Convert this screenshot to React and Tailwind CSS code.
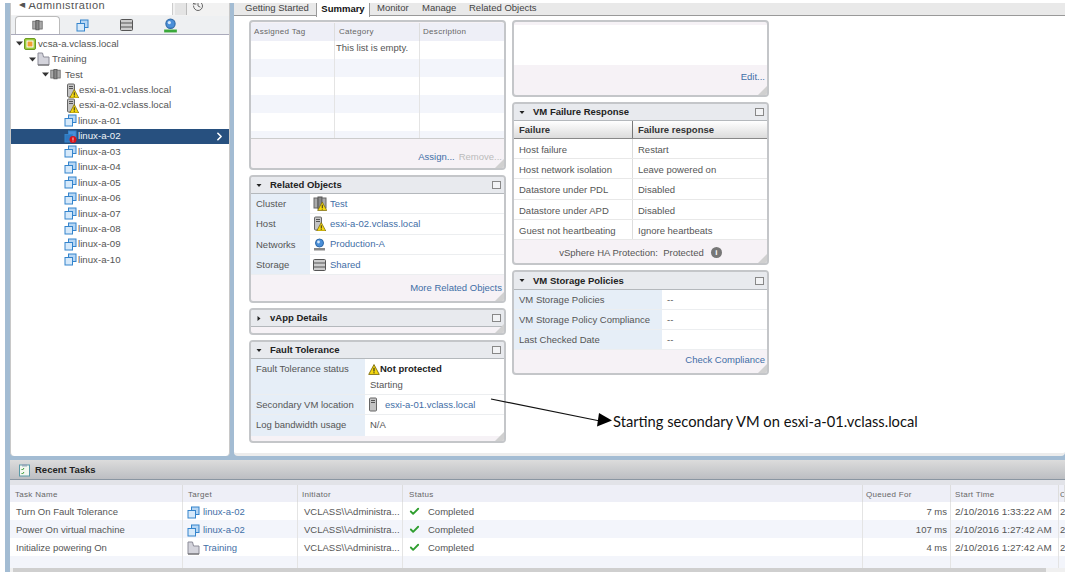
import React from "react";
import { ChevronRight, Check, History } from "lucide-react";

const Tri = ({ open = true, className = "" }) => (
  <svg width="7" height="7" viewBox="0 0 7 7" className={`shrink-0 ${className}`}>
    {open ? <path d="M0 1.5h7L3.5 5.5z" fill="#333" /> : <path d="M1.5 0v7L5.5 3.5z" fill="#333" />}
  </svg>
);

const SmallTri = ({ open = true }) => (
  <svg width="6" height="7" viewBox="0 0 6 7" className="ml-[2px] shrink-0">
    {open ? <path d="M.5 2h5L3 5z" fill="#222" /> : <path d="M1.5 1v5L4.5 3.500z" fill="#222" />}
  </svg>
);

const Warn = ({ x = 0, y = 0, s = 8 }) => (
  <g transform={`translate(${x} ${y}) scale(${s / 10})`}>
    <path d="M5 .5L9.8 9.5H.2z" fill="#f5d80f" stroke="#7a6a10" strokeWidth=".8" />
    <path d="M4.500 3.500h1v3.400h-1zM4.500 7.500h1v1h-1z" fill="#222" />
  </g>
);

const VmIcon = ({ alert, dark }) => (
  <svg width="13" height="13" viewBox="0 0 13 13" className="shrink-0">
    <rect x="4.500" y="1" width="7.500" height="7.500" fill={dark ? "#4a90d8" : "#b6d6f4"} stroke="#3484cc" />
    <rect x="1" y="4.500" width="7.500" height="7.500" fill={dark ? "#2f78c0" : "#d6e9fa"} stroke="#3484cc" />
    {alert && <circle cx="9" cy="9.500" r="3.500" fill="#d8141c" />}
    {alert && <path d="M8.600 7.500h.8v2.500h-.8zM8.600 10.600h.8v.8h-.8z" fill="#fff" />}
  </svg>
);

const HostIcon = ({ warn = true }) => (
  <svg width="13" height="15" viewBox="0 0 13 15" className="shrink-0">
    <rect x="1.500" y="1" width="7" height="13" rx="1" fill="#c4c4c4" stroke="#666" />
    <path d="M3 3.500h4M3 5.500h4" stroke="#555" />
    {warn && <Warn x={3.500} y={6} s={9.500} />}
  </svg>
);

const ClusterIcon = ({ warn, w = 14 }) => (
  <svg width={w} height="15" viewBox="0 0 14 15" className="shrink-0">
    <rect x="1" y="2" width="4" height="10" fill="#aaa" stroke="#666" />
    <rect x="5" y="1" width="4" height="12" fill="#888" stroke="#555" />
    <rect x="9" y="2" width="4" height="10" fill="#aaa" stroke="#666" />
    {warn && <Warn x={4.500} y={5.500} s={9.500} />}
  </svg>
);

const FolderIcon = () => (
  <svg width="13" height="14" viewBox="0 0 13 14" className="shrink-0">
    <path d="M1 13V1h4.500l1 4H12v8z" fill="#d4d4dc" stroke="#8c8c98" />
    <path d="M1 13h11" stroke="#666" />
  </svg>
);

const VcIcon = () => (
  <svg width="12" height="12" viewBox="0 0 12 12" className="shrink-0">
    <rect x=".5" y=".5" width="11" height="11" rx="1.500" fill="#9ccc3c" stroke="#6c9a20" />
    <rect x="3" y="3" width="6" height="6" fill="#f0a030" stroke="#fff" />
  </svg>
);

const StorageIcon = () => (
  <svg width="13" height="12" viewBox="0 0 13 12" className="shrink-0">
    <rect x=".5" y=".5" width="12" height="11" rx="1" fill="#ccc" stroke="#555" />
    <path d="M1 4h11M1 8h11" stroke="#555" />
  </svg>
);

const NetIcon = ({ big }) => (
  <svg width={big ? 15 : 13} height={big ? 15 : 13} viewBox="0 0 13 13" className="shrink-0">
    <circle cx="6.500" cy="5" r="4" fill="#4a8fd8" stroke="#2f6aa8" />
    <circle cx="5.500" cy="4" r="1.400" fill="#d6e8fa" />
    <rect x="1" y="10" width="11" height="2.500" fill={big ? "#3aa83a" : "#888"} />
  </svg>
);

const Row = ({ label, labelW, children, h, last }) => (
  <div className={`flex ${h} ${last ? "" : "border-b border-[#eceef0]"}`}>
    <div className={`${labelW} shrink-0 bg-[#e6eef7] pl-[5px] pt-[4px]`}>{label}</div>
    <div className="flex-1 bg-white pl-[5px] pt-[4px]">{children}</div>
  </div>
);

const IconRow = ({ label, labelW, h, icon, children }) => (
  <div className={`flex ${h} border-b border-[#eceef0]`}>
    <div className={`${labelW} shrink-0 bg-[#e6eef7] pl-[5px] pt-[4px]`}>{label}</div>
    <div className="flex flex-1 items-center bg-white pl-[3px]">
      <span className="w-[17px] shrink-0">{icon}</span>
      {children}
    </div>
  </div>
);

const Grip = () => (
  <svg width="9" height="9" viewBox="0 0 9 9" className="absolute bottom-0 right-0">
    <path d="M9 0v9H0z" fill="#d0d0d0" />
  </svg>
);

const Panel = ({ title, open = true, h, head = "h-[17px]", children }) => (
  <div className={`relative ${h} shrink-0 overflow-hidden rounded-[4px] border-2 border-[#c4c6c9] bg-[#f6f2f6]`}>
    {title && (
      <div className={`flex ${head} items-center border-b border-[#b4b8bc] bg-[#e8eaee] pl-[3px] pr-[3px] font-bold text-[#222]`}>
        <SmallTri open={open} />
        <span className="ml-[8px] flex-1">{title}</span>
        <span className="h-[8px] w-[9px] border border-[#888] bg-[#f2f3f5]" />
      </div>
    )}
    {children}
    <Grip />
  </div>
);

const Link = ({ children }) => <span className="text-[#3f6ea6]">{children}</span>;

const treeVms = ["linux-a-03", "linux-a-04", "linux-a-05", "linux-a-06", "linux-a-07", "linux-a-08", "linux-a-09", "linux-a-10"];

const TreeRow = ({ pad, children, selected }) => (
  <div className={`flex h-[15.45px] items-center ${pad} ${selected ? "bg-[#27507f] text-[#f0f4f8]" : ""}`}>{children}</div>
);

const Nav = () => (
  <div className="flex w-[220px] shrink-0 flex-col rounded-b-[4px] border-l border-r border-[#c8c8c8] bg-white text-[9.7px]">
    <div className="flex h-[13px] shrink-0 items-start overflow-hidden bg-[#f2f2f2]">
      <div className="flex h-[12px] w-[162px] items-start overflow-hidden border-r border-[#ccc] bg-white pl-[8px] text-[11px] leading-[10px] tracking-[0.5px]">
        <span className="-mt-[3px] mr-[3px] text-[8px] text-[#555]">◀</span>
        <span className="-mt-[3px]">Administration</span>
      </div>
      <div className="ml-[2px] h-[12px] w-[12px] border-r border-[#bbb] bg-[#e4e4e4]" />
      <History size={12} className="ml-[5px] -mt-[3px] text-[#666]" />
    </div>
    <div className="flex h-[19px] shrink-0 border-b border-[#aab] bg-[#eef0f2] pl-[4px]">
      <div className="flex w-[45px] items-center justify-center rounded-t-[4px] border border-b-0 border-[#bbb] bg-white">
        <ClusterIcon w={11} />
      </div>
      <div className="flex w-[44px] items-center justify-center"><VmIcon /></div>
      <div className="flex w-[44px] items-center justify-center"><StorageIcon /></div>
      <div className="flex w-[44px] items-center justify-center"><NetIcon big /></div>
    </div>
    <div className="pt-[1px]">
      <TreeRow pad="pl-[5px]"><Tri /><span className="ml-[1px] mr-[2px]"><VcIcon /></span>vcsa-a.vclass.local</TreeRow>
      <TreeRow pad="pl-[18px]"><Tri /><span className="ml-[1px] mr-[2px]"><FolderIcon /></span>Training</TreeRow>
      <TreeRow pad="pl-[31px]"><Tri /><span className="ml-[1px] mr-[4px]"><ClusterIcon w={11} /></span>Test</TreeRow>
      <TreeRow pad="pl-[55px]"><HostIcon />esxi-a-01.vclass.local</TreeRow>
      <TreeRow pad="pl-[55px]"><HostIcon />esxi-a-02.vclass.local</TreeRow>
      <TreeRow pad="pl-[53px]"><VmIcon /><span className="ml-[1px]">linux-a-01</span></TreeRow>
      <TreeRow pad="pl-[53px] pr-[3px]" selected>
        <VmIcon alert dark /><span className="ml-[1px] flex-1">linux-a-02</span>
        <ChevronRight size={13} strokeWidth={3} className="text-white" />
      </TreeRow>
      {treeVms.map((name) => (
        <TreeRow key={name} pad="pl-[53px]"><VmIcon /><span className="ml-[1px]">{name}</span></TreeRow>
      ))}
    </div>
  </div>
);

const TabBar = () => (
  <div className="flex h-[13px] shrink-0 border-b border-[#999] bg-[#e9e9e9] pl-[11px] leading-[9px] text-[#444]">
    <div className="w-[71px]">Getting Started</div>
    <div className="h-[14px] w-[54px] border-l border-r border-[#999] bg-white pt-px text-center font-bold text-[#111]">Summary</div>
    <div className="w-[52px] pl-[7px]">Monitor</div>
    <div className="w-[47px]">Manage</div>
    <div>Related Objects</div>
  </div>
);

const tagRows = ["bg-white", "bg-[#f3f5fb]", "bg-white", "bg-[#f3f5fb]", "bg-white", "bg-[#f3f5fb]"];

const TagsPanel = () => (
  <Panel h="h-[150px]">
    <div className="mt-px grid h-[18px] grid-cols-[84px_85px_1fr] bg-[#eeeff7] text-[8px] tracking-[0.3px] text-[#666]">
      <div className="border-r border-[#ddd] pl-[3px] pt-[3px]">Assigned Tag</div>
      <div className="border-r border-[#ddd] pl-[4px] pt-[3px]">Category</div>
      <div className="pl-[3px] pt-[3px]">Description</div>
    </div>
    {tagRows.map((bg, i) => (
      <div key={i} className={`grid grid-cols-[84px_85px_1fr] ${bg} ${i === 5 ? "h-[8px] border-b border-[#ccc]" : "h-[18px]"}`}>
        <div className="border-r border-[#e4e4e4]" />
        <div className="border-r border-[#e4e4e4] pl-px pt-px">{i === 0 ? "This list is empty." : ""}</div>
        <div />
      </div>
    ))}
    <div className="pr-[2px] pt-[12px] text-right">
      <Link>Assign...</Link><span className="ml-[4px] text-[#bbb]">Remove...</span>
    </div>
  </Panel>
);

const RelatedPanel = () => (
  <Panel title="Related Objects" h="h-[128px]">
    <IconRow label="Cluster" labelW="w-[59px]" h="h-[20.3px]" icon={<ClusterIcon warn />}><Link>Test</Link></IconRow>
    <IconRow label="Host" labelW="w-[59px]" h="h-[20.3px]" icon={<HostIcon />}><Link>esxi-a-02.vclass.local</Link></IconRow>
    <IconRow label="Networks" labelW="w-[59px]" h="h-[20.3px]" icon={<NetIcon />}><Link>Production-A</Link></IconRow>
    <IconRow label="Storage" labelW="w-[59px]" h="h-[20.3px]" icon={<StorageIcon />}><Link>Shared</Link></IconRow>
    <div className="pr-[2px] pt-[7px] text-right"><Link>More Related Objects</Link></div>
  </Panel>
);

const FaultPanel = () => (
  <Panel title="Fault Tolerance" h="h-[103px]">
    <Row label="Fault Tolerance status" labelW="w-[114px]" h="h-[36px]">
      <div className="flex items-center font-bold text-[#222]">
        <svg width="12" height="11" viewBox="0 0 10 10" className="-ml-[2px] shrink-0"><Warn s={10} /></svg>
        Not protected
      </div>
      <div className="mt-[4px]">Starting</div>
    </Row>
    <IconRow label="Secondary VM location" labelW="w-[114px]" h="h-[20px]" icon={<HostIcon warn={false} />}>
      <Link>esxi-a-01.vclass.local</Link>
    </IconRow>
    <Row label="Log bandwidth usage" labelW="w-[114px]" h="h-[20.5px]" last>N/A</Row>
  </Panel>
);

const failureRows = [
  ["Host failure", "Restart"],
  ["Host network isolation", "Leave powered on"],
  ["Datastore under PDL", "Disabled"],
  ["Datastore under APD", "Disabled"],
  ["Guest not heartbeating", "Ignore heartbeats"],
];

const FailurePanel = () => (
  <Panel title="VM Failure Response" h="h-[163px]">
    <div className="grid h-[18px] grid-cols-[119px_1fr] border-b border-[#888] bg-gradient-to-b from-white to-[#dcdcdc] font-bold text-[#333]">
      <div className="border-r border-[#777] pl-[5px] pt-[3px]">Failure</div>
      <div className="pl-[5px] pt-[3px]">Failure response</div>
    </div>
    {failureRows.map(([a, b]) => (
      <div key={a} className="grid h-[20.2px] grid-cols-[119px_1fr] border-b border-[#e8e8e8] bg-white">
        <div className="border-r border-[#ddd] pl-[5px] pt-[5px]">{a}</div>
        <div className="pl-[5px] pt-[5px]">{b}</div>
      </div>
    ))}
    <div className="flex items-center justify-center gap-[4px] pt-[7px]">
      <span>vSphere HA Protection:&nbsp; Protected</span>
      <span className="ml-[3px] flex h-[11px] w-[11px] items-center justify-center rounded-full bg-[#777] text-[8px] font-bold text-white">i</span>
    </div>
  </Panel>
);

const StoragePanel = () => (
  <Panel title="VM Storage Policies" h="h-[105px]" head="h-[18px]">
    <Row label="VM Storage Policies" labelW="w-[148px]" h="h-[20px]">--</Row>
    <Row label="VM Storage Policy Compliance" labelW="w-[148px]" h="h-[20px]">--</Row>
    <Row label="Last Checked Date" labelW="w-[148px]" h="h-[20px]">--</Row>
    <div className="pr-[2px] pt-[4px] text-right"><Link>Check Compliance</Link></div>
  </Panel>
);

const taskCols = "grid-cols-[173px_115px_105px_460px_88px_108px_1fr]";

const tasks = [
  { name: "Turn On Fault Tolerance", target: "linux-a-02", queued: "7 ms", start: "2/10/2016 1:33:22 AM", bg: "bg-white" },
  { name: "Power On virtual machine", target: "linux-a-02", queued: "107 ms", start: "2/10/2016 1:27:42 AM", bg: "bg-[#f3f5fb]" },
  { name: "Initialize powering On", target: "Training", queued: "4 ms", start: "2/10/2016 1:27:42 AM", bg: "bg-white", folder: true },
];

const headPads = ["pl-[5px]", "pl-[5px]", "pl-[4px]", "pl-[6px]", "pl-[3px]", "pl-[4px]", "pl-[1px]"];

const RecentTasks = () => (
  <div className="mt-[4px] flex h-[113px] shrink-0 flex-col bg-white">
    <div className="flex h-[20px] shrink-0 items-center border-b border-[#8a96a2] bg-gradient-to-b from-[#dcdcdc] to-[#bcbec2] pl-[8px] pt-px font-bold text-[#222]">
      <svg width="13" height="14" viewBox="0 0 13 14" className="shrink-0">
        <rect x="1.500" y="2" width="10" height="11" fill="#f4f8f0" stroke="#5a9aa8" />
        <rect x="4" y="1" width="5" height="2.500" fill="#9ab" />
        <path d="M3.500 6l1 1 1.500-2M3.500 10l1 1 1.500-2" stroke="#3a9a3a" fill="none" />
      </svg>
      <span className="ml-[4px]">Recent Tasks</span>
    </div>
    <div className="h-[5px] shrink-0 bg-[#e2e3e8]" />
    <div className={`grid h-[17px] shrink-0 ${taskCols} bg-[#eeeff7] text-[8px] tracking-[0.3px] text-[#666]`}>
      {["Task Name", "Target", "Initiator", "Status", "Queued For", "Start Time", "C"].map((c, i) => (
        <div key={c} className={`overflow-hidden border-r border-[#ddd] pt-[4px] ${headPads[i]}`}>{c}</div>
      ))}
    </div>
    {tasks.map((t) => (
      <div key={t.name} className={`grid h-[18px] shrink-0 ${taskCols} ${t.bg}`}>
        <div className="border-r border-[#e4e4e4] pl-[6px] pt-[4px]">{t.name}</div>
        <div className="flex items-center gap-[3px] border-r border-[#e4e4e4] pl-[4px] pt-[2px]">
          {t.folder ? <FolderIcon /> : <VmIcon />}<Link>{t.target}</Link>
        </div>
        <div className="border-r border-[#e4e4e4] pl-[6px] pt-[4px]">VCLASS\\Administra...</div>
        <div className="flex items-center border-r border-[#e4e4e4] pl-[6px] pt-[2px]">
          <Check size={11} strokeWidth={4} className="-mt-[2px] text-[#2f9e2f]" /><span className="ml-[8px]">Completed</span>
        </div>
        <div className="border-r border-[#e4e4e4] pr-[3px] pt-[4px] text-right">{t.queued}</div>
        <div className="border-r border-[#e4e4e4] pl-[4px] pt-[4px] text-[9.9px]">{t.start}</div>
        <div className="overflow-hidden pl-[1px] pt-[4px]">2</div>
      </div>
    ))}
    <div className={`grid h-[12px] shrink-0 ${taskCols} bg-[#f3f5fb]`}>
      {[0, 1, 2, 3, 4, 5].map((i) => <div key={i} className="border-r border-[#e4e4e4]" />)}
    </div>
    <div className="flex h-[4px] shrink-0 bg-[#f0f0f0]">
      <div className="ml-[3px] w-[1033px] bg-[#cfcfcf]" />
    </div>
  </div>
);

const App = () => (
  <div className="relative h-[577px] w-[1069px] overflow-hidden bg-white font-['Liberation_Sans',Arial,sans-serif] text-[9.5px] leading-[12px] text-[#555]">
    <div className="ml-[5px] mr-[4px] mt-[3px] flex h-[569px] flex-col bg-[#a3bcd3] pl-[5px]">
      <div className="flex h-[453px] shrink-0 gap-[4px]">
        <Nav />
        <div className="flex flex-1 flex-col overflow-hidden rounded-b-[4px] border-b-[3px] border-[#ececec] bg-white">
          <TabBar />
          <div className="flex gap-[6px] pl-[15px] pt-[4px]">
            <div className="flex w-[257px] flex-col gap-[5px]">
              <TagsPanel />
              <RelatedPanel />
              <Panel title="vApp Details" open={false} h="h-[27px]" />
              <FaultPanel />
            </div>
            <div className="flex w-[257px] flex-col gap-[5px]">
              <Panel h="h-[77px]">
                <div className="mt-[3px] h-[40px] bg-white" />
                <div className="pr-[2px] pt-[6px] text-right"><Link>Edit...</Link></div>
              </Panel>
              <FailurePanel />
              <StoragePanel />
            </div>
          </div>
        </div>
      </div>
      <RecentTasks />
    </div>

    <svg width="1069" height="577" className="pointer-events-none absolute left-0 top-0">
      <path d="M491 399L600 421" stroke="#111" strokeWidth="1.2" />
      <path d="M612 420.500L599 413L597 426.500z" fill="#000" />
    </svg>
    <div className="absolute left-[613px] top-[412px] font-['Lato',sans-serif] text-[14.7px] leading-[18px] text-[#111]">
      Starting secondary VM on esxi-a-01.vclass.local
    </div>
  </div>
);

export default App;
